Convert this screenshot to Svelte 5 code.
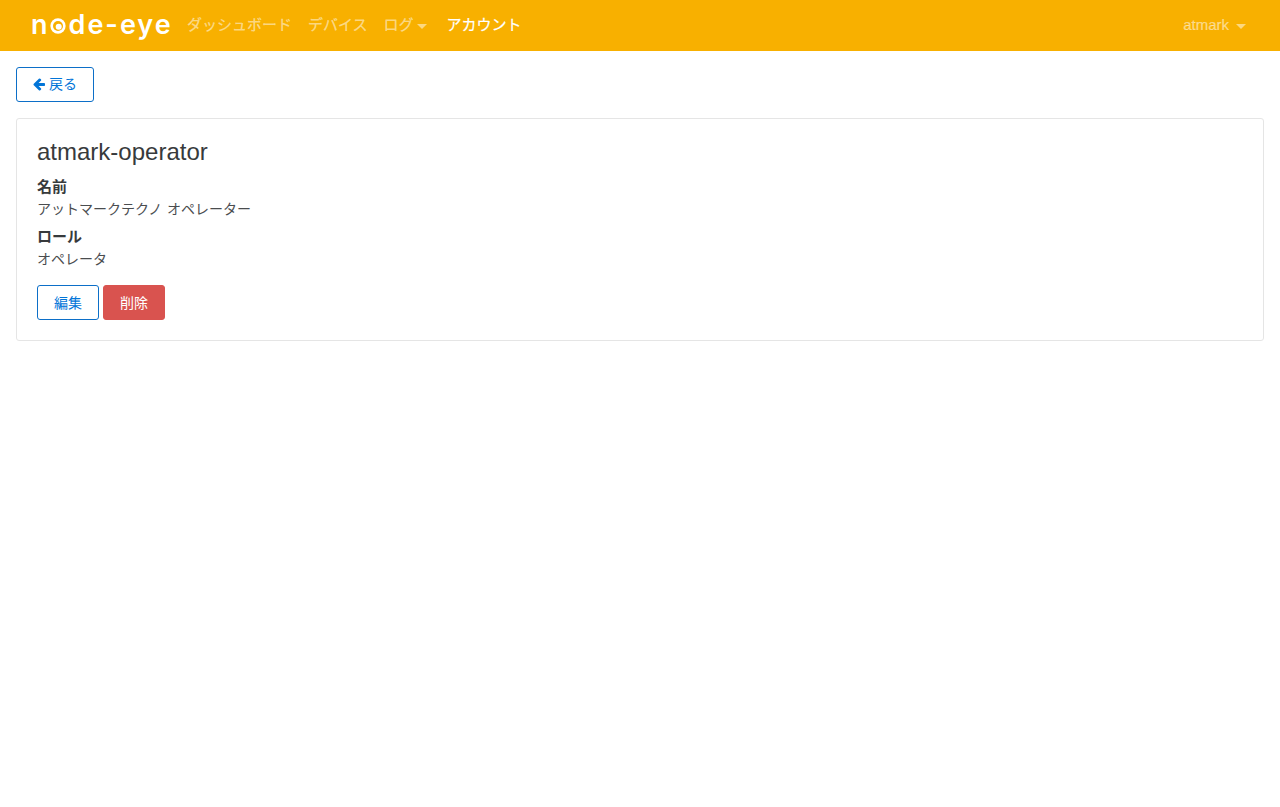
<script lang="ts">
  const navLinks = [
    { label: "ダッシュボード", caret: false, active: false },
    { label: "デバイス", caret: false, active: false },
    { label: "ログ", caret: true, active: false },
    { label: "アカウント", caret: false, active: true },
  ];
</script>

<nav class="navbar">
  <a class="brand" href="#top" aria-label="node-eye">
    <span>n</span><svg class="eye" viewBox="0 0 18 18" aria-hidden="true">
      <circle cx="9" cy="9" r="8.6" fill="#fff" />
      <circle cx="9" cy="9" r="5.6" fill="#f8b000" />
      <circle cx="9.8" cy="9.8" r="3.4" fill="#fff" />
    </svg><span>de-eye</span>
  </a>
  <ul class="nav">
    {#each navLinks as link}
      <li>
        <a href="#top" class="nav-link" class:active={link.active}>
          {link.label}{#if link.caret}<span class="caret"></span>{/if}
        </a>
      </li>
    {/each}
  </ul>
  <a href="#top" class="nav-link user">atmark<span class="caret user-caret"></span></a>
</nav>

<main class="content">
  <div>
    <button class="btn btn-outline back">
      <svg class="arrow" viewBox="0 0 1792 1792" aria-hidden="true">
        <path
          fill="currentColor"
          d="M1664 896v128q0 53-32.5 90.5t-84.5 37.5h-704l293 294q38 36 38 90t-38 90l-75 76q-37 37-90 37-52 0-91-37l-651-652q-37-37-37-90 0-52 37-91l651-650q38-38 91-38 52 0 90 38l75 74q38 38 38 91t-38 91l-293 293h704q52 0 84.5 37.5t32.5 90.5z"
        />
      </svg>
      戻る
    </button>
  </div>

  <section class="card">
    <h4>atmark-operator</h4>
    <dl>
      <dt>名前</dt>
      <dd>アットマークテクノ オペレーター</dd>
      <dt>ロール</dt>
      <dd>オペレータ</dd>
    </dl>
    <div class="actions">
      <button class="btn btn-outline">編集</button>
      <button class="btn btn-danger">削除</button>
    </div>
  </section>
</main>

<style>
  :global(body) {
    margin: 0;
    background: #fff;
    color: #373a3c;
    font-family: "Liberation Sans", "Noto Sans CJK JP", sans-serif;
    font-size: 14px;
    line-height: 1.5;
  }

  .navbar {
    display: flex;
    align-items: center;
    height: 51px;
    padding: 0 16px 0 31px;
    background: #f8b000;
    font-size: 15px;
  }

  .brand {
    display: flex;
    align-items: center;
    width: 140px;
    margin-right: 16px;
    padding-bottom: 2px;
    color: #fff;
    text-decoration: none;
    font-family: Inter, sans-serif;
    font-size: 27px;
    font-weight: 600;
    line-height: 1;
    letter-spacing: 2px;
    white-space: nowrap;
  }

  .eye {
    width: 16px;
    height: 16px;
    margin: 3px 3px 0 0;
    flex-shrink: 0;
  }

  .nav {
    display: flex;
    gap: 16px;
    margin: 0;
    padding: 0;
    list-style: none;
  }

  .nav-link {
    color: rgba(255, 255, 255, 0.5);
    text-decoration: none;
    -webkit-text-stroke: 0.2px currentColor;
  }

  .nav-link.active {
    color: #fff;
  }

  .user {
    margin-left: auto;
    padding-right: 18px;
  }

  .caret {
    display: inline-block;
    margin: 0 4px 0 3px;
    vertical-align: middle;
    border-top: 5px solid;
    border-left: 5px solid transparent;
    border-right: 5px solid transparent;
  }

  .user-caret {
    margin: 0 0 0 7px;
  }

  .content {
    display: flex;
    flex-direction: column;
    gap: 16px;
    padding: 16px;
  }

  .btn {
    height: 35px;
    padding: 0 16px;
    border: 1px solid transparent;
    border-radius: 3px;
    background: none;
    font: inherit;
    line-height: 1;
    cursor: pointer;
  }

  .btn-outline {
    border-color: #0c6fc8;
    color: #0275d8;
  }

  .btn-danger {
    border-color: #d9534f;
    background: #d9534f;
    color: #fff;
  }

  .back {
    padding-bottom: 2px;
  }

  .arrow {
    width: 14px;
    height: 14px;
    margin: 0 -1px 0 -1px;
    vertical-align: -2px;
  }

  .card {
    padding: 20px;
    border: 1px solid #e5e5e5;
    border-radius: 3px;
  }

  h4 {
    margin: 0 0 12px;
    font-size: 24px;
    font-weight: 400;
    line-height: 1.1;
  }

  dl {
    margin: 0 0 15px;
  }

  dt {
    margin-bottom: 2px;
    font-size: 15px;
    font-weight: 700;
    line-height: 20px;
  }

  dd {
    margin: 0 0 7px;
    color: #4a4d4f;
    word-spacing: 1px;
  }

  dd:last-child {
    margin-bottom: 0;
  }

  .actions {
    display: flex;
    gap: 4px;
  }
</style>
